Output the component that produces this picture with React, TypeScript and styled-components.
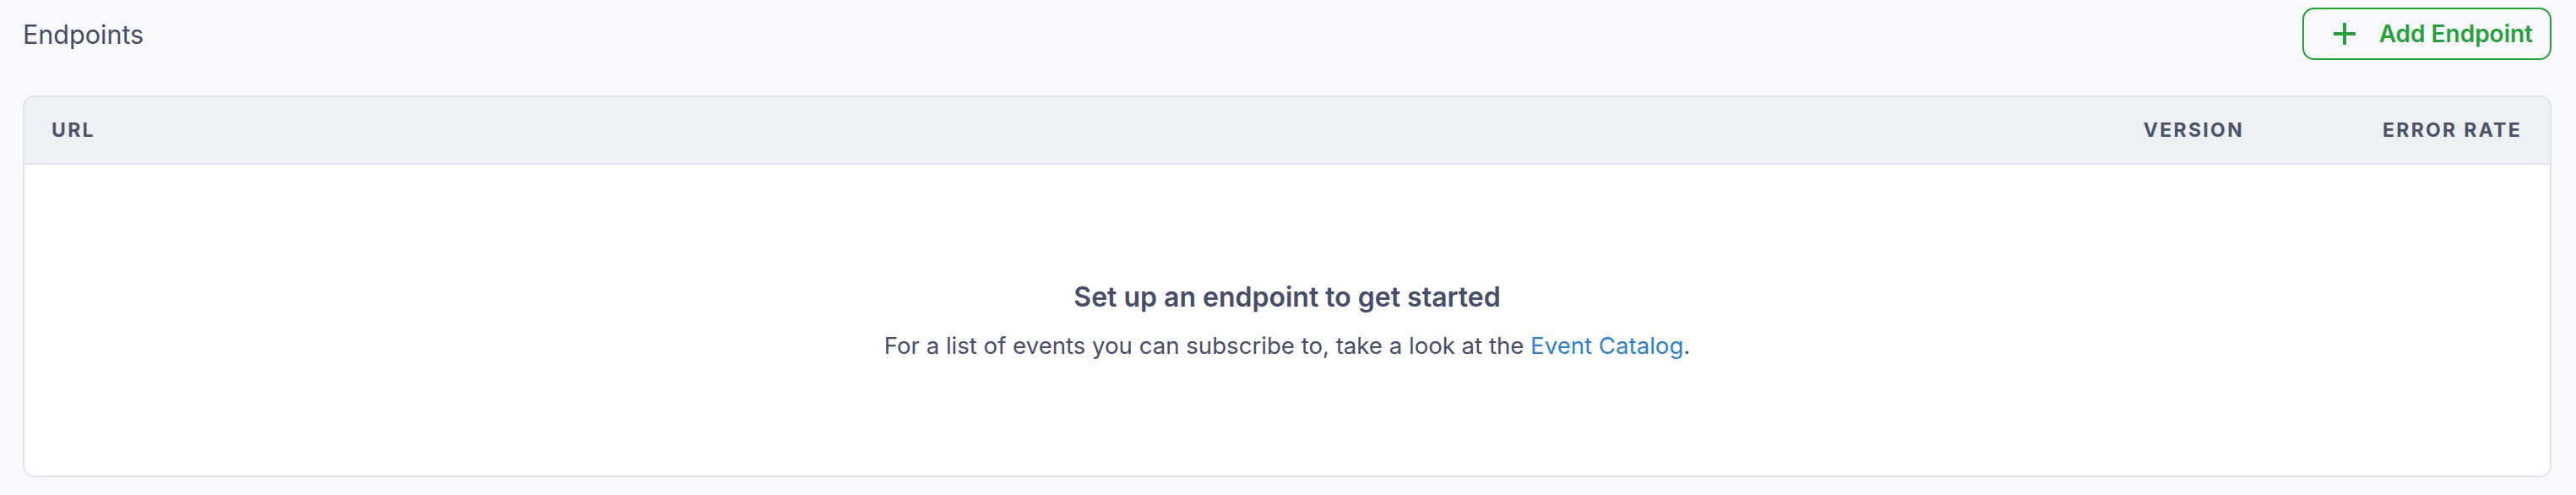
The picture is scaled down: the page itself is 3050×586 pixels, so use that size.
import styled, { createGlobalStyle } from 'styled-components'

const GlobalStyle = createGlobalStyle`
    html, body {
        margin: 0;
        padding: 0;
        background: #f8f9fc;
    }
    body {
        font-family: Inter, "Noto Sans", "Liberation Sans", sans-serif;
        color: #464d69;
        -webkit-font-smoothing: antialiased;
    }
`

const Page = styled.main`
    padding: 9px 29px 22px 27px;
    display: flex;
    flex-direction: column;
    gap: 42px;
`

const TopBar = styled.header`
    display: flex;
    align-items: center;
    justify-content: space-between;
    height: 62px;
`

const PageTitle = styled.h1`
    margin: 0;
    font-size: 30.5px;
    font-weight: 400;
    color: #464d69;
`

const AddButton = styled.button`
    display: flex;
    align-items: center;
    gap: 27px;
    height: 62px;
    padding: 0 20px 0 34px;
    box-sizing: border-box;
    border: 2px solid #27a03b;
    border-radius: 14px;
    background: transparent;
    color: #27a03b;
    font-family: inherit;
    font-size: 28px;
    font-weight: 600;
    cursor: pointer;
`

const Card = styled.section`
    background: #ffffff;
    border: 2px solid #e1e2ec;
    border-radius: 14px;
    overflow: hidden;
`

const HeadRow = styled.div`
    display: grid;
    grid-template-columns: 1fr auto auto;
    column-gap: 164px;
    align-items: center;
    height: 78px;
    padding: 0 33px 0 32px;
    background: #edf1f6;
    border-bottom: 2px solid #e1e2ec;
`

const HeadCell = styled.span`
    font-size: 23px;
    font-weight: 700;
    letter-spacing: 0.1em;
    text-transform: uppercase;
    color: #4a5368;
`

const Empty = styled.div`
    height: 368px;
    display: flex;
    flex-direction: column;
    align-items: center;
    justify-content: center;
    gap: 21px;
`

const EmptyTitle = styled.h2`
    margin: 0;
    font-size: 32px;
    font-weight: 600;
    color: #464d69;
`

const EmptyText = styled.p`
    margin: 0;
    font-size: 27.6px;
    color: #464d69;
`

const Link = styled.a`
    color: #2f7fd0;
    text-decoration: none;
`

function PlusIcon() {
    return (
        <svg width="28" height="28" viewBox="0 0 28 28" fill="none">
            <path d="M14 1v26M1 14h26" stroke="currentColor" strokeWidth="4" />
        </svg>
    )
}

export default function App() {
    return (
        <>
            <GlobalStyle />
            <Page>
                <TopBar>
                    <PageTitle>Endpoints</PageTitle>
                    <AddButton>
                        <PlusIcon />
                        Add Endpoint
                    </AddButton>
                </TopBar>
                <Card>
                    <HeadRow>
                        <HeadCell>URL</HeadCell>
                        <HeadCell>Version</HeadCell>
                        <HeadCell>Error Rate</HeadCell>
                    </HeadRow>
                    <Empty>
                        <EmptyTitle>Set up an endpoint to get started</EmptyTitle>
                        <EmptyText>
                            For a list of events you can subscribe to, take a look at the <Link href="#">Event Catalog</Link>.
                        </EmptyText>
                    </Empty>
                </Card>
            </Page>
        </>
    )
}
